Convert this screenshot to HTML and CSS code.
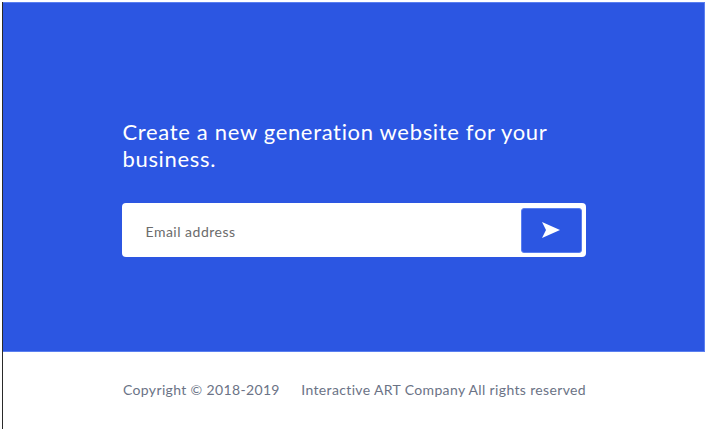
FILE: index.html
```html
<!DOCTYPE html>
<html>
<head>
<meta charset="utf-8">
<link rel="stylesheet" href="styles.css">
</head>
<body>
<div class="frame">
  <section class="hero">
    <div class="inner">
      <h1 class="title">Create a new generation website for your business.</h1>
      <form class="signup">
        <span class="placeholder">Email address</span>
        <button type="button" class="send">
          <svg width="18" height="16" viewBox="0 0 18 16"><path d="M0 0 L18 8 L0 16 L4 8 Z" fill="#fff"/></svg>
        </button>
      </form>
    </div>
  </section>
  <footer class="footer">
    <div class="inner foot-row">
      <span>Copyright © 2018-2019</span>
      <span>Interactive ART Company All rights reserved</span>
    </div>
  </footer>
</div>
</body>
</html>
```

FILE: styles.css
```css
* { box-sizing: border-box; }
html, body { margin: 0; padding: 0; background: #fff; }
body { font-family: Lato, "Noto Sans", sans-serif; }
.frame {
  margin: 2px 0 0 2px;
  width: 703px;
  height: 427px;
  border-left: 1px solid #2a2a2a;
  display: flex;
  flex-direction: column;
}
.hero {
  background: #2c56e2;
  border-top: 1px solid #5a7ff0;
  border-right: 1px solid #5a7ff0;
  border-bottom: 1px solid #5a7ff0;
  height: 350px;
  padding-top: 115px;
}
.inner {
  width: 464px;
  margin: 0 auto;
  padding-left: 1px;
}
.title {
  margin: 0;
  color: #fff;
  font-weight: 400;
  font-size: 22px;
  line-height: 27px;
  letter-spacing: 0.67px;
}
.signup {
  margin: 31px 0 0 -1px;
  height: 54px;
  background: #fff;
  border-radius: 4px;
  display: flex;
  align-items: center;
  justify-content: space-between;
  padding: 0 4px 0 24px;
}
.placeholder {
  color: #6b6b6b;
  font-size: 14px;
  letter-spacing: 0.5px;
  padding-top: 2px;
}
.send {
  width: 61px;
  height: 45px;
  border: 1px solid #5a7ff0;
  border-radius: 3px;
  background: #2c56e2;
  display: flex;
  align-items: center;
  justify-content: center;
  padding: 0;
}
.footer { flex: 1; }
.foot-row {
  padding-top: 29px;
  display: flex;
  justify-content: space-between;
  color: #6b7386;
  font-size: 14px;
  letter-spacing: 0.35px;
}
```
